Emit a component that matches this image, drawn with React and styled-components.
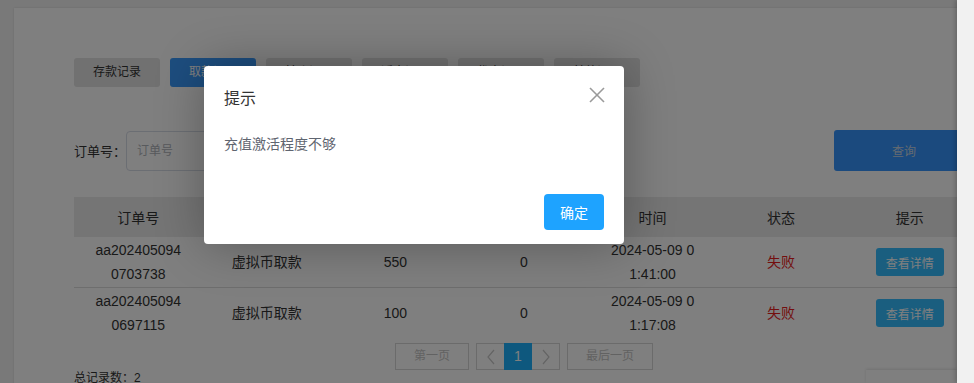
import styled, { createGlobalStyle } from "styled-components";

const GlobalStyle = createGlobalStyle`
    html, body {
        margin: 0;
        padding: 0;
        background: #f2f2f2;
    }

    body {
        font-family: "Liberation Sans", "Noto Sans CJK SC", sans-serif;
        color: #333;
    }

    * {
        box-sizing: border-box;
    }
`;

const tabs = ["存款记录", "取款记录", "转账记录", "返水记录", "优惠记录", "其他记录"];

const rows = [
    { id: "aa2024050940703738", type: "虚拟币取款", amount: "550", fee: "0", time: "2024-05-09 01:41:00", status: "失败" },
    { id: "aa2024050940697115", type: "虚拟币取款", amount: "100", fee: "0", time: "2024-05-09 01:17:08", status: "失败" },
];

const Chevron = ({ dir }) => (
    <svg width="8" height="16" viewBox="0 0 8 16">
        <polyline
            points={dir === "left" ? "7,1 1,8 7,15" : "1,1 7,8 1,15"}
            fill="none"
            stroke="#c8c8c8"
            strokeWidth="1.2"
        />
    </svg>
);

const App = () => {
    return (
        <Frame>
            <GlobalStyle />
            <Viewport>
                <Card>
                    <TabBar>
                        {tabs.map((t, i) => (
                            <Tab key={t} $active={i === 1}>{t}</Tab>
                        ))}
                    </TabBar>

                    <SearchRow>
                        <Label>订单号：</Label>
                        <Input placeholder="订单号" />
                        <QueryButton>查询</QueryButton>
                    </SearchRow>

                    <Table>
                        <thead>
                            <tr>
                                <th>订单号</th>
                                <th>类型</th>
                                <th>金额</th>
                                <th>手续费</th>
                                <th>时间</th>
                                <th>状态</th>
                                <th>提示</th>
                            </tr>
                        </thead>
                        <tbody>
                            {rows.map((r) => (
                                <tr key={r.id}>
                                    <td>{r.id}</td>
                                    <td>{r.type}</td>
                                    <td>{r.amount}</td>
                                    <td>{r.fee}</td>
                                    <td>{r.time}</td>
                                    <td className="fail">{r.status}</td>
                                    <td>
                                        <DetailButton>查看详情</DetailButton>
                                    </td>
                                </tr>
                            ))}
                        </tbody>
                    </Table>

                    <Pager>
                        <PageButton>第一页</PageButton>
                        <PageGroup>
                            <PageArrow><Chevron dir="left" /></PageArrow>
                            <PageCurrent>1</PageCurrent>
                            <PageArrow><Chevron dir="right" /></PageArrow>
                        </PageGroup>
                        <PageButton>最后一页</PageButton>
                    </Pager>

                    <Footer>
                        <span>总记录数：2</span>
                        <span className="right">共1页，当前第1页</span>
                    </Footer>
                </Card>

                <FloatBox />

                <Mask>
                    <Dialog>
                        <DialogHead>
                            <span>提示</span>
                            <CloseIcon width="16" height="16" viewBox="0 0 16 16">
                                <line x1="1" y1="1" x2="15" y2="15" />
                                <line x1="15" y1="1" x2="1" y2="15" />
                            </CloseIcon>
                        </DialogHead>
                        <DialogBody>充值激活程度不够</DialogBody>
                        <DialogFoot>
                            <ConfirmButton>确定</ConfirmButton>
                        </DialogFoot>
                    </Dialog>
                </Mask>
            </Viewport>
            <ScrollTrack />
        </Frame>
    );
};

const Frame = styled.div`
    display: flex;
    width: 974px;
    height: 383px;
    overflow: hidden;
`;

const Viewport = styled.div`
    position: relative;
    flex: 0 0 957px;
    overflow: hidden;
    padding: 8px 0 0 14px;
    background: #f2f2f2;
`;

const ScrollTrack = styled.div`
    flex: 1;
    background: #f1f1f1;
    box-shadow: -2px 0 4px rgba(0, 0, 0, 0.18);
    z-index: 2;
`;

const Card = styled.div`
    width: 1000px;
    min-height: 400px;
    background: #fff;
    padding: 50px 0 0 60px;
    box-shadow: 0 0 2px rgba(0, 0, 0, 0.12);
`;

const TabBar = styled.div`
    display: flex;
    gap: 10px;
`;

const Tab = styled.div`
    width: 86px;
    height: 29px;
    line-height: 29px;
    text-align: center;
    font-size: 12px;
    border-radius: 3px;
    color: ${(p) => (p.$active ? "#fff" : "#333")};
    background: ${(p) => (p.$active ? "#3a9afc" : "#e2e2e2")};
`;

const SearchRow = styled.div`
    display: flex;
    align-items: center;
    width: 900px;
    margin-top: 43px;
`;

const Label = styled.span`
    flex: 0 0 52px;
    white-space: nowrap;
    font-size: 13px;
    color: #333;
`;

const Input = styled.input`
    width: 210px;
    height: 40px;
    border: 1px solid #d6dce6;
    border-radius: 4px;
    padding: 0 10px;
    font-size: 12px;
    font-family: inherit;
    outline: none;

    &::placeholder {
        color: #b0b4bb;
    }
`;

const QueryButton = styled.button`
    margin-left: auto;
    width: 140px;
    height: 41px;
    border: none;
    border-radius: 3px;
    background: #3694fc;
    color: #c9d4e2;
    font-size: 12px;
    font-family: inherit;
`;

const Table = styled.table`
    width: 900px;
    margin-top: 26px;
    border-collapse: collapse;
    table-layout: fixed;
    font-size: 14px;
    color: #333;

    th {
        height: 40px;
        background: #eaeaea;
        font-weight: normal;
        padding: 0;
    }

    td {
        padding: 1px 19px;
        line-height: 24px;
        text-align: center;
        word-break: break-all;
    }

    tbody tr + tr td {
        border-top: 1px solid #dcdcdc;
    }

    td.fail {
        color: #e81c1c;
    }
`;

const DetailButton = styled.button`
    width: 68px;
    height: 28px;
    border: none;
    border-radius: 3px;
    background: #34bcff;
    color: #fff;
    font-size: 12px;
    font-family: inherit;
    padding: 0;
`;

const Pager = styled.div`
    display: flex;
    justify-content: center;
    align-items: center;
    gap: 7px;
    width: 900px;
    margin-top: 5px;
    font-size: 12px;
    color: #c4c4c4;
`;

const PageButton = styled.div`
    height: 27px;
    line-height: 25px;
    padding: 0 18px;
    border: 1px solid #d6d6d6;
`;

const PageGroup = styled.div`
    display: flex;
    height: 27px;
    border: 1px solid #d6d6d6;
`;

const PageArrow = styled.div`
    width: 27px;
    display: flex;
    align-items: center;
    justify-content: center;
`;

const PageCurrent = styled.div`
    width: 28px;
    margin-top: -1px;
    height: 27px;
    line-height: 27px;
    text-align: center;
    font-size: 14px;
    background: #1cb0fc;
    color: #fff;
`;

const Footer = styled.div`
    display: flex;
    justify-content: space-between;
    width: 900px;
    margin-top: 1px;
    font-size: 12px;
    line-height: 14px;
    color: #333;

    .right {
        margin-right: 10px;
    }
`;

const FloatBox = styled.div`
    position: absolute;
    right: 0;
    bottom: 0;
    width: 91px;
    height: 13px;
    background: #fff;
    box-shadow: 0 -1px 3px rgba(0, 0, 0, 0.12);
`;

const Mask = styled.div`
    position: absolute;
    inset: 0;
    background: rgba(0, 0, 0, 0.5);
`;

const Dialog = styled.div`
    position: absolute;
    left: 204px;
    top: 66px;
    width: 420px;
    height: 178px;
    background: #fff;
    border-radius: 4px;
    box-shadow: 1px 1px 50px rgba(0, 0, 0, 0.3);
    display: flex;
    flex-direction: column;
`;

const DialogHead = styled.div`
    display: flex;
    align-items: center;
    justify-content: space-between;
    height: 62px;
    padding: 0 19px 0 20px;
    font-size: 16px;
    color: #333;
`;

const CloseIcon = styled.svg`
    stroke: #9a9a9a;
    stroke-width: 1.6;
    margin-top: -4px;
`;

const DialogBody = styled.div`
    padding: 6px 20px 0;
    font-size: 14px;
    line-height: 20px;
    color: #5f6570;
    flex: 1;
`;

const DialogFoot = styled.div`
    display: flex;
    justify-content: flex-end;
    padding: 0 20px 14px;
`;

const ConfirmButton = styled.button`
    width: 60px;
    height: 36px;
    border: none;
    border-radius: 4px;
    background: #1ea3ff;
    color: #fff;
    font-size: 14px;
    font-family: inherit;
`;

export default App;
